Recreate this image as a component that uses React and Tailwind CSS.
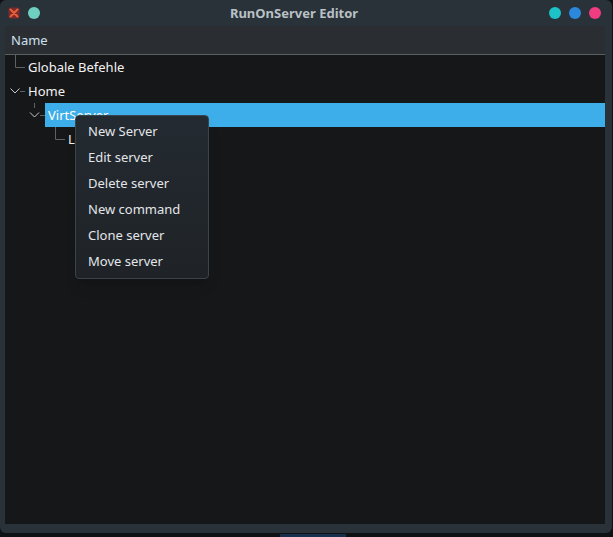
import React from "react";

const font = { fontFamily: '"Noto Sans", "Open Sans", sans-serif' };

function CloseIcon() {
  return (
    <svg width="12" height="12" viewBox="0 0 12 12">
      <rect x="0.5" y="0.5" width="11" height="11" rx="2" fill="#7a2a2a" />
      <path d="M2.5 2.5 L9.5 9.5 M9.5 2.5 L2.5 9.5" stroke="#e8603a" strokeWidth="2" strokeLinecap="round" />
    </svg>
  );
}

const LC = "#5e6165";

export default function App() {
  const menu = ["New Server", "Edit server", "Delete server", "New command", "Clone server", "Move server"];
  return (
    <div className="relative w-[613px] h-[537px] bg-[#0f1215] overflow-hidden" style={font}>
      <div className="w-[612px] h-[533px] bg-[#283238] rounded-md flex flex-col">
        {/* Title bar */}
        <div className="h-[26px] flex items-center">
          <div className="flex items-center pl-[8px] gap-[8px] w-[40px]">
            <CloseIcon />
            <div className="w-[12px] h-[12px] shrink-0 rounded-full bg-[#6fd0c1]" />
          </div>
          <div className="flex-1 text-center text-[13px] font-bold text-[#b9c0c6] leading-none">RunOnServer Editor</div>
          <div className="flex items-center gap-[8px] pr-[11px] w-[64px] justify-end">
            <div className="w-[12px] h-[12px] shrink-0 rounded-full bg-[#1cc2c8]" />
            <div className="w-[12px] h-[12px] shrink-0 rounded-full bg-[#2b88dc]" />
            <div className="w-[12px] h-[12px] shrink-0 rounded-full bg-[#f03d82]" />
          </div>
        </div>
        {/* Content */}
        <div className="ml-[5px] mr-[7px] mb-[9px] flex-1 flex flex-col bg-[#161719]">
          <div className="h-[29px] bg-[#2a2e32] border-b border-[#5c5f62] flex items-center pl-[6px] pt-[2px] text-[13px] text-[#cfe0ee]">Name</div>
          <div className="flex flex-col text-[13px] text-[#f2f2f2]">
            <div className="h-6 flex items-center">
              <svg width="23" height="24" className="shrink-0">
                <path d={`M10.5 0 V12.5 H20`} stroke={LC} fill="none" />
              </svg>
              <span className="mt-[2px]">Globale Befehle</span>
            </div>
            <div className="h-6 flex items-center">
              <svg width="23" height="24" className="shrink-0">
                <polyline points="5.5,9.5 10,14 14.5,9.5" stroke="#c8ccd0" fill="none" />
                <path d="M15 12.5 H20" stroke={LC} fill="none" />
              </svg>
              <span className="mt-[2px]">Home</span>
            </div>
            <div className="h-6 flex items-center">
              <svg width="40" height="24" className="shrink-0">
                <path d="M29.5 0 V5" stroke={LC} fill="none" />
                <polyline points="25,9.5 29.5,14 34,9.5" stroke="#c8ccd0" fill="none" />
                <path d="M35 12.5 H40" stroke={LC} fill="none" />
              </svg>
              <div className="flex-1 h-6 bg-[#3daee9] flex items-center pl-[3px] pt-[2px] text-white">VirtServer</div>
            </div>
            <div className="h-6 flex items-center">
              <svg width="63" height="24" className="shrink-0">
                <path d="M50.5 0 V12.5 H60" stroke={LC} fill="none" />
              </svg>
              <span className="mt-[2px]">Linux</span>
            </div>
          </div>
        </div>
      </div>
      <div className="absolute left-[280px] bottom-0 w-[66px] h-[3px] bg-[#17304d]" />
      {/* Context menu */}
      <div className="absolute left-[75px] top-[115px] w-[134px] py-[3px] rounded-[4px] border border-[#3b444b] bg-gradient-to-b from-[#232a31] to-[#1f2327] shadow-lg">
        {menu.map((m) => (
          <div key={m} className="h-[26px] flex items-center pl-[12px] text-[13px] text-[#e3e6e9]">{m}</div>
        ))}
      </div>
    </div>
  );
}
